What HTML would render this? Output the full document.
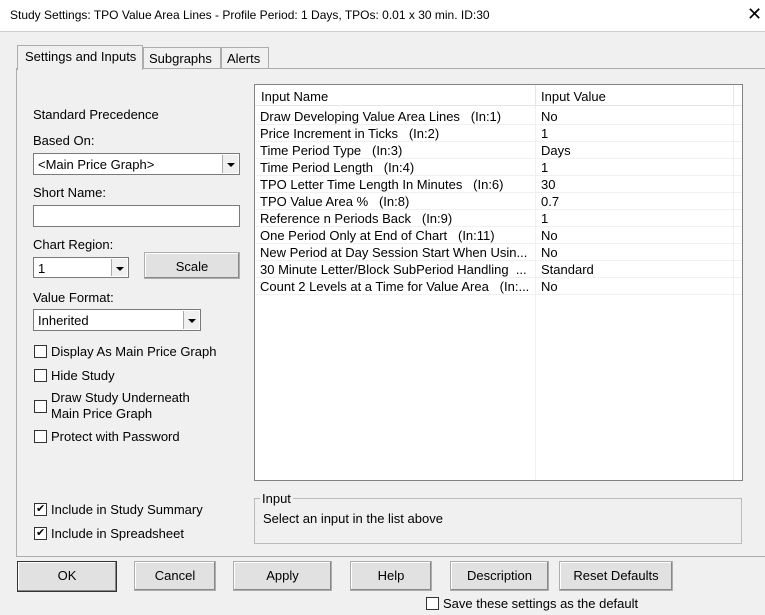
<!DOCTYPE html>
<html><head><style>
*{box-sizing:border-box;margin:0;padding:0}
body{width:765px;height:615px;background:#f0f0f0;font-family:"Liberation Sans",sans-serif;font-size:13px;color:#000;position:relative;overflow:hidden}
.a{position:absolute;white-space:nowrap}
.title{left:0;top:0;width:765px;height:31px;background:#fff;}
.box{position:absolute;background:#fff;border:1px solid #7a7a7a}
.combo{position:absolute;background:#fff;border:1px solid #7a7a7a;padding:3px 4px}
.dd{position:absolute;right:1px;top:1px;bottom:1px;width:16px;background:#f0f0f0;border-left:1px solid #aaa}
.dd:after{content:"";position:absolute;left:4px;top:8px;border-left:4px solid transparent;border-right:4px solid transparent;border-top:4px solid #000}
.btn{position:absolute;background:#e1e1e1;border:1px solid #adadad;text-align:center;line-height:28px;box-shadow:inset -1px -1px 0 #888,inset 1px 1px 0 #fff}
.cb{position:absolute;width:13px;height:13px;border:1px solid #333;background:#fff}
.cb.c:after{content:"✔";position:absolute;left:1px;top:-2px;font-size:11px}
.row{position:absolute;left:1px;width:486px;height:17px;border-bottom:1px solid #f0f0f0}
.row span{position:absolute;top:1px}
</style></head><body>
<div class="a title"></div>
<div class="a" style="left:10px;top:8px;font-size:12px">Study Settings: TPO Value Area Lines - Profile Period: 1 Days, TPOs: 0.01 x 30 min. ID:30</div>
<div class="a" style="left:747px;top:4px;font-size:18px">✕</div>
<div class="a" style="left:0;top:31px;width:765px;height:1px;background:#ccc"></div>

<div class="a" style="left:16px;top:68px;width:760px;height:489px;border:1px solid #adadad;background:#f9f9f9"></div>
<div class="a" style="left:16px;top:68px;width:760px;height:489px;border:1px solid #adadad;background:#f0f0f0"></div>
<div class="a" style="left:17px;top:45px;width:126px;height:25px;border:1px solid #adadad;border-bottom:none;background:#f0f0f0;padding:3px 0 0 7px">Settings and Inputs</div>
<div class="a" style="left:143px;top:47px;width:78px;height:22px;border:1px solid #adadad;background:#f0f0f0;padding:3px 0 0 5px">Subgraphs</div>
<div class="a" style="left:221px;top:47px;width:48px;height:22px;border:1px solid #adadad;background:#f0f0f0;padding:3px 0 0 5px">Alerts</div>

<div class="a" style="left:33px;top:107px">Standard Precedence</div>
<div class="a" style="left:33px;top:133px">Based On:</div>
<div class="combo" style="left:33px;top:153px;width:207px;height:22px">&lt;Main Price Graph&gt;<div class="dd"></div></div>
<div class="a" style="left:33px;top:185px">Short Name:</div>
<div class="box" style="left:33px;top:205px;width:207px;height:22px"></div>
<div class="a" style="left:33px;top:237px">Chart Region:</div>
<div class="combo" style="left:33px;top:257px;width:96px;height:21px">1<div class="dd"></div></div>
<div class="btn" style="left:144px;top:252px;width:96px;height:27px">Scale</div>
<div class="a" style="left:33px;top:290px">Value Format:</div>
<div class="combo" style="left:33px;top:309px;width:168px;height:22px">Inherited<div class="dd"></div></div>
<div class="cb" style="left:34px;top:345px"></div><div class="a" style="left:51px;top:344px">Display As Main Price Graph</div>
<div class="cb" style="left:34px;top:369px"></div><div class="a" style="left:51px;top:368px">Hide Study</div>
<div class="cb" style="left:34px;top:400px"></div><div class="a" style="left:51px;top:390px;line-height:16px">Draw Study Underneath<br>Main Price Graph</div>
<div class="cb" style="left:34px;top:430px"></div><div class="a" style="left:51px;top:429px">Protect with Password</div>
<div class="cb c" style="left:34px;top:503px"></div><div class="a" style="left:51px;top:502px">Include in Study Summary</div>
<div class="cb c" style="left:34px;top:527px"></div><div class="a" style="left:51px;top:526px">Include in Spreadsheet</div>

<div class="box" style="left:254px;top:84px;width:489px;height:397px;border-color:#828282">
 <div class="a" style="left:0;top:0;width:487px;height:21px;background:#fff;border-bottom:1px solid #e5e5e5"></div>
 <div class="a" style="left:6px;top:4px">Input Name</div>
 <div class="a" style="left:280px;top:0;width:1px;height:20px;background:#e5e5e5"></div>
 <div class="a" style="left:286px;top:4px">Input Value</div>
 <div class="a" style="left:478px;top:0;width:1px;height:20px;background:#e5e5e5"></div>
 <div class="a" style="left:280px;top:21px;width:1px;height:374px;background:#f0f0f0"></div>
 <div class="a" style="left:478px;top:21px;width:1px;height:374px;background:#f0f0f0"></div>
 <div class="row" style="top:23px"><span style="left:4px">Draw Developing Value Area Lines &nbsp; (In:1)</span><span style="left:285px">No</span></div>
 <div class="row" style="top:40px"><span style="left:4px">Price Increment in Ticks &nbsp; (In:2)</span><span style="left:285px">1</span></div>
 <div class="row" style="top:57px"><span style="left:4px">Time Period Type &nbsp; (In:3)</span><span style="left:285px">Days</span></div>
 <div class="row" style="top:74px"><span style="left:4px">Time Period Length &nbsp; (In:4)</span><span style="left:285px">1</span></div>
 <div class="row" style="top:91px"><span style="left:4px">TPO Letter Time Length In Minutes &nbsp; (In:6)</span><span style="left:285px">30</span></div>
 <div class="row" style="top:108px"><span style="left:4px">TPO Value Area % &nbsp; (In:8)</span><span style="left:285px">0.7</span></div>
 <div class="row" style="top:125px"><span style="left:4px">Reference n Periods Back &nbsp; (In:9)</span><span style="left:285px">1</span></div>
 <div class="row" style="top:142px"><span style="left:4px">One Period Only at End of Chart &nbsp; (In:11)</span><span style="left:285px">No</span></div>
 <div class="row" style="top:159px"><span style="left:4px">New Period at Day Session Start When Usin...</span><span style="left:285px">No</span></div>
 <div class="row" style="top:176px"><span style="left:4px">30 Minute Letter/Block SubPeriod Handling &nbsp;...</span><span style="left:285px">Standard</span></div>
 <div class="row" style="top:193px"><span style="left:4px">Count 2 Levels at a Time for Value Area &nbsp; (In:...</span><span style="left:285px">No</span></div>
</div>

<div class="a" style="left:254px;top:498px;width:488px;height:46px;border:1px solid #bbb"></div>
<div class="a" style="left:260px;top:491px;background:#f0f0f0;padding:0 2px">Input</div>
<div class="a" style="left:263px;top:511px">Select an input in the list above</div>

<div class="btn" style="left:17px;top:561px;width:100px;height:31px;border:1px solid #333">OK</div>
<div class="btn" style="left:134px;top:561px;width:82px;height:30px">Cancel</div>
<div class="btn" style="left:233px;top:561px;width:99px;height:30px">Apply</div>
<div class="btn" style="left:350px;top:561px;width:82px;height:30px">Help</div>
<div class="btn" style="left:450px;top:561px;width:99px;height:30px">Description</div>
<div class="btn" style="left:559px;top:561px;width:114px;height:30px">Reset Defaults</div>
<div class="cb" style="left:426px;top:597px"></div><div class="a" style="left:443px;top:596px">Save these settings as the default</div>
</body></html>
